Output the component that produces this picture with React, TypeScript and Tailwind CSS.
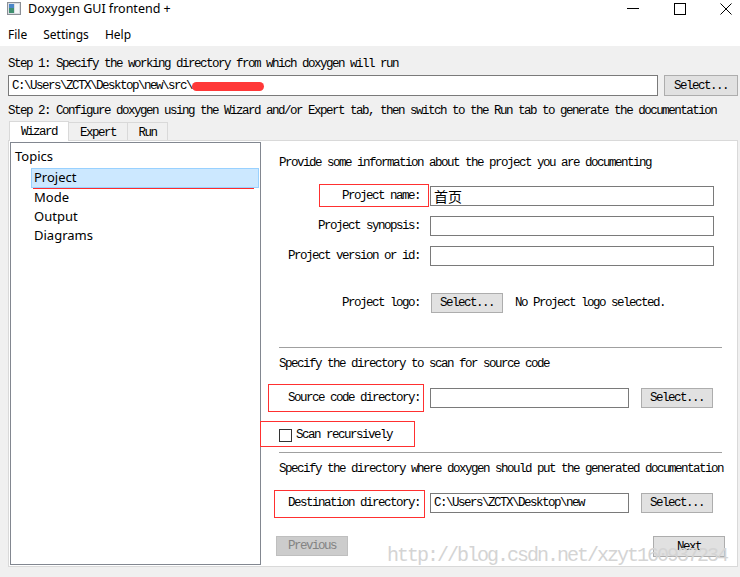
import React from "react"

const mono = "font-['Liberation_Mono','Noto_Sans_CJK_SC',monospace] text-[12.5px] tracking-[-1.5px] leading-[14px] whitespace-nowrap"
const ui = "font-['Noto_Sans','Liberation_Sans',sans-serif]"

function Button({ label, disabled, className = "" }: { label: string; disabled?: boolean; className?: string }) {
  return (
    <div
      className={`flex h-[20px] w-[72px] shrink-0 items-center justify-center border ${
        disabled ? "border-[#bfbfbf] bg-[#cccccc] text-[#838383]" : "border-[#adadad] bg-[#e1e1e1] text-black"
      } ${className}`}
    >
      <span className={mono}>{label}</span>
    </div>
  )
}

function Field({ value, className = "" }: { value?: React.ReactNode; className?: string }) {
  return (
    <div className={`flex h-[20px] shrink-0 items-center border border-[#7a7a7a] bg-white pl-[3px] text-black ${className}`}>
      {value}
    </div>
  )
}

function RedBox({ className }: { className: string }) {
  return <div className={`pointer-events-none absolute border border-[#ff3030] ${className}`} />
}

function Label({ children }: { children: React.ReactNode }) {
  return <span className={`w-[141px] shrink-0 text-right text-black ${mono}`}>{children}</span>
}

export default function App() {
  return (
    <div className="relative flex h-[577px] w-[740px] flex-col overflow-hidden bg-[#f0f0f0] text-black">
      {/* title bar */}
      <div className="flex h-[24px] shrink-0 items-start bg-white pt-[1px]">
        <svg className="ml-[7px] mt-[1px]" width="14" height="13" viewBox="0 0 14 13">
          <rect x="0.5" y="0.5" width="13" height="12" fill="#d9dde2" stroke="#8a8f96" />
          <rect x="2" y="2" width="5" height="9" fill="#3f8f6f" />
          <rect x="2" y="2" width="5" height="4" fill="#4a86c8" />
          <rect x="8" y="2" width="4" height="9" fill="#f4f6f8" />
        </svg>
        <span className={`${ui} ml-[7px] text-[12.5px] leading-[16px]`}>Doxygen GUI frontend +</span>
        <div className="ml-auto flex items-start">
          <svg className="mr-[34px] mt-[7px]" width="13" height="2" viewBox="0 0 13 2">
            <line x1="0" y1="0.5" x2="12" y2="0.5" stroke="#000" />
          </svg>
          <svg className="mr-[34px] mt-[2px]" width="12" height="12" viewBox="0 0 12 12">
            <rect x="0.5" y="0.5" width="11" height="11" fill="none" stroke="#000" />
          </svg>
          <svg className="mr-[8px] mt-[2px]" width="12" height="12" viewBox="0 0 12 12">
            <path d="M0.5 0.5 L11.5 11.5 M11.5 0.5 L0.5 11.5" stroke="#000" />
          </svg>
        </div>
      </div>
      {/* menu bar */}
      <div className={`${ui} flex h-[22px] shrink-0 items-center bg-white text-[12px]`}>
        <span className="ml-[8px]">File</span>
        <span className="ml-[16px]">Settings</span>
        <span className="ml-[16px]">Help</span>
      </div>

      <div className="flex flex-col pl-[8px] pr-[2px]">
        <div className={`h-[29px] pt-[11px] ${mono}`}>Step 1: Specify the working directory from which doxygen will run</div>
        <div className="flex h-[21px] gap-[6px]">
          <div className="flex h-[21px] w-[650px] shrink-0 items-center border border-[#7a7a7a] bg-white pl-[3px]">
            <span className={mono}>C:\Users\ZCTX\Desktop\new\src\</span>
            <span className="mt-[1px] h-[9px] w-[72px] rounded-full bg-[#ff3838]" />
          </div>
          <div className="flex h-[21px] w-[74px] shrink-0 items-center justify-center border border-[#adadad] bg-[#e1e1e1]">
            <span className={mono}>Select...</span>
          </div>
        </div>
        <div className={`h-[25px] pt-[8px] ${mono}`}>
          Step 2: Configure doxygen using the Wizard and/or Expert tab, then switch to the Run tab to generate the documentation
        </div>

        {/* tabs */}
        <div className="flex h-[19px] items-end pl-[1px]">
          <div className={`relative z-10 -mb-px flex h-[20px] w-[60px] justify-center border border-b-0 border-[#d9d9d9] bg-white pt-[3px] ${mono}`}>
            Wizard
          </div>
          <div className={`flex h-[18px] w-[59px] justify-center border border-b-0 border-l-0 border-[#d9d9d9] pt-[3px] ${mono}`}>
            Expert
          </div>
          <div className={`flex h-[18px] w-[40px] justify-center border border-b-0 border-l-0 border-[#d9d9d9] pt-[3px] ${mono}`}>
            Run
          </div>
        </div>

        {/* tab panel */}
        <div className="flex h-[427px] w-[730px] shrink-0 border border-[#d9d9d9] bg-white pb-[1px] pl-[1px] pt-[1px]">
          {/* tree */}
          <div className={`${ui} flex h-[423px] w-[251px] shrink-0 flex-col border border-[#828790] bg-white pt-[4px] text-[13px]`}>
            <div className="flex h-[20px] items-center pl-[4px]">Topics</div>
            <div className="relative ml-[20px] mr-[1px] mt-[1px] flex h-[20px] items-center border border-[#99d1ff] bg-[#cce8ff] pl-[2px]">
              Project
              <div className="absolute left-[1px] right-[4px] top-[19px] h-px bg-[#ff2b2b]" />
            </div>
            <div className="ml-[23px] flex h-[19px] items-center">Mode</div>
            <div className="ml-[23px] flex h-[19px] items-center">Output</div>
            <div className="ml-[23px] flex h-[19px] items-center">Diagrams</div>
          </div>

          {/* wizard page */}
          <div className="flex w-[446px] shrink-0 flex-col pl-[18px] pt-[14px]">
            <div className={mono}>Provide some information about the project you are documenting</div>

            <div className="mt-[16px] flex flex-col gap-[10px]">
              <div className="relative flex h-[20px] items-center gap-[10px]">
                <RedBox className="left-[40px] top-[-2px] h-[23px] w-[110px]" />
                <Label>Project name:</Label>
                <Field
                  className="w-[284px]"
                  value={<span className="font-['Noto_Sans_CJK_SC',sans-serif] text-[14px] leading-[16px]">首页</span>}
                />
              </div>
              <div className="flex h-[20px] items-center gap-[10px]">
                <Label>Project synopsis:</Label>
                <Field className="w-[284px]" />
              </div>
              <div className="flex h-[20px] items-center gap-[10px]">
                <Label>Project version or id:</Label>
                <Field className="w-[284px]" />
              </div>
            </div>

            <div className="mt-[27px] flex h-[20px] items-center">
              <Label>Project logo:</Label>
              <Button label="Select..." className="ml-[11px]" />
              <span className={`ml-[12px] ${mono}`}>No Project logo selected.</span>
            </div>

            <div className="mt-[34px] h-px w-[443px] bg-[#a0a0a0]" />
            <div className={`mt-[9px] ${mono}`}>Specify the directory to scan for source code</div>

            <div className="relative mt-[17px] flex h-[20px] items-center">
              <RedBox className="left-[-11px] top-[-4px] h-[28px] w-[156px]" />
              <Label>Source code directory:</Label>
              <Field className="ml-[10px] w-[199px]" />
              <Button label="Select..." className="ml-[12px]" />
            </div>

            <div className="relative mt-[17px] flex h-[20px] items-center">
              <RedBox className="left-[-19px] top-[-4px] h-[26px] w-[155px]" />
              <div className="h-[13px] w-[13px] shrink-0 border border-[#333333] bg-white" />
              <span className={`ml-[4px] ${mono}`}>Scan recursively</span>
            </div>

            <div className="mt-[7px] h-px w-[443px] bg-[#a0a0a0]" />
            <div className={`mt-[9px] ${mono}`}>Specify the directory where doxygen should put the generated documentation</div>

            <div className="relative mt-[17px] flex h-[20px] items-center">
              <RedBox className="left-[-5px] top-[-3px] h-[28px] w-[151px]" />
              <Label>Destination directory:</Label>
              <Field className="ml-[10px] w-[199px]" value={<span className={mono}>C:\Users\ZCTX\Desktop\new</span>} />
              <Button label="Select..." className="ml-[12px]" />
            </div>

            <div className="-ml-[3px] mt-[23px] flex w-[449px] justify-between">
              <Button label="Previous" disabled />
              <Button label="Next" className="h-[21px]" />
            </div>
          </div>
        </div>
      </div>

      {/* watermark */}
      <div className="pointer-events-none absolute left-[387px] top-[544px] font-['Liberation_Mono',monospace] text-[20px] leading-[24px] tracking-[-2px] text-[#d4d4d4]">
        http://blog.csdn.net/xzyt160937234
      </div>
    </div>
  )
}
